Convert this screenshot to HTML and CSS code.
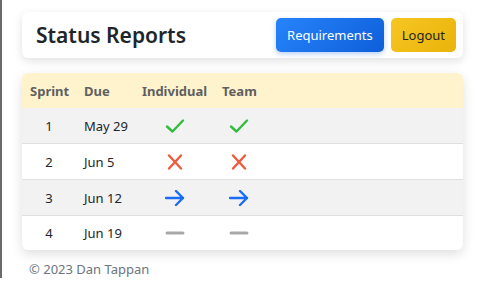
FILE: index.html
```html
<!DOCTYPE html>
<html lang="en">

<head>
  <meta charset="UTF-8">
  <meta name="viewport" content="width=device-width, initial-scale=1.0">
  <title>Status Reports</title>
  <link rel="stylesheet" href="styles.css">
</head>

<body>
  <div class="page">
    <div class="topbar">
      <h1>Status Reports</h1>
      <div class="actions">
        <button class="btn btn-blue">Requirements</button>
        <button class="btn btn-yellow">Logout</button>
      </div>
    </div>

    <div class="reports">
      <div class="row head">
        <div class="num">Sprint</div>
        <div>Due</div>
        <div class="mid">Individual</div>
        <div>Team</div>
        <div></div>
      </div>
      <div class="row shade">
        <div class="num">1</div>
        <div>May 29</div>
        <div class="mid"><svg class="ico" viewBox="0 0 20 16"><path d="M2 8.5 L7.5 13.5 L18 2.5" class="ok"/></svg></div>
        <div class="mid"><svg class="ico" viewBox="0 0 20 16"><path d="M2 8.5 L7.5 13.5 L18 2.5" class="ok"/></svg></div>
        <div></div>
      </div>
      <div class="row">
        <div class="num">2</div>
        <div>Jun 5</div>
        <div class="mid"><svg class="ico" viewBox="0 0 20 16"><path d="M4 1.5 L16 14.5 M16 1.5 L4 14.5" class="bad"/></svg></div>
        <div class="mid"><svg class="ico" viewBox="0 0 20 16"><path d="M4 1.5 L16 14.5 M16 1.5 L4 14.5" class="bad"/></svg></div>
        <div></div>
      </div>
      <div class="row shade">
        <div class="num">3</div>
        <div>Jun 12</div>
        <div class="mid"><svg class="ico" viewBox="0 0 20 16"><path d="M1 8 L18 8 M11 1 L18 8 L11 15" class="go"/></svg></div>
        <div class="mid"><svg class="ico" viewBox="0 0 20 16"><path d="M1 8 L18 8 M11 1 L18 8 L11 15" class="go"/></svg></div>
        <div></div>
      </div>
      <div class="row last">
        <div class="num">4</div>
        <div>Jun 19</div>
        <div class="mid"><svg class="ico" viewBox="0 0 20 16"><path d="M2 8 L18 8" class="none"/></svg></div>
        <div class="mid"><svg class="ico" viewBox="0 0 20 16"><path d="M2 8 L18 8" class="none"/></svg></div>
        <div></div>
      </div>
    </div>

    <footer>&copy; 2023 Dan Tappan</footer>
  </div>
</body>

</html>
```

FILE: styles.css
```css
* {
  margin: 0;
  padding: 0;
  box-sizing: border-box;
}
html {
  border-left: 2px solid #6b6b6b;
  background: #fff;
}
body {
  font-family: "Noto Sans", "Open Sans", sans-serif;
  color: #212529;
}
.page {
  padding: 12px 17px 0 20px;
}
.topbar {
  display: flex;
  align-items: center;
  justify-content: space-between;
  height: 46px;
  padding: 0 7px 0 14px;
  background: #fff;
  border-radius: 6px;
  box-shadow: 0 3px 10px rgba(0, 0, 0, 0.12);
}
h1 {
  font-size: 21px;
  font-weight: 600;
}
.actions {
  display: flex;
  gap: 7px;
}
.btn {
  font-family: inherit;
  font-size: 13px;
  height: 34px;
  padding: 0 11px;
  border: none;
  border-radius: 5px;
  cursor: pointer;
}
.btn-blue {
  color: #fff;
  background: linear-gradient(135deg, #2784fb, #0e5fd9);
  box-shadow: 0 2px 5px rgba(13, 95, 217, 0.3);
}
.btn-yellow {
  color: #212529;
  background: linear-gradient(135deg, #f7c623, #e9b30a);
}
.reports {
  margin-top: 15px;
  border-radius: 6px;
  overflow: hidden;
  background: #fff;
  box-shadow: 0 4px 12px rgba(0, 0, 0, 0.13);
  font-size: 13px;
  white-space: nowrap;
}
.row {
  display: grid;
  grid-template-columns: 54px 59px 79px 49px 1fr;
  height: 36px;
  align-items: center;
  border-bottom: 1px solid #dfdfdf;
}
.row > div {
  padding: 0 8px;
}
.head {
  height: 35px;
  background: #fff3cd;
  font-weight: 700;
  color: #5f5f5f;
  border-bottom: none;
}
.shade {
  background: #f2f2f2;
}
.last {
  border-bottom: none;
  height: 34px;
}
.num {
  text-align: center;
}
.head .num {
  text-align: left;
}
.mid {
  display: flex;
  justify-content: center;
}
.ico {
  width: 20px;
  height: 16px;
  fill: none;
  stroke-width: 2.4;
  stroke-linecap: round;
  stroke-linejoin: round;
}
.ok {
  stroke: #33bd3f;
}
.bad {
  stroke: #f05a3e;
}
.go {
  stroke: #1b6cf2;
}
.none {
  stroke: #a8a8a8;
  stroke-width: 3;
}
footer {
  margin-top: 10px;
  padding-left: 7px;
  font-size: 13px;
  color: #6c757d;
}
```
